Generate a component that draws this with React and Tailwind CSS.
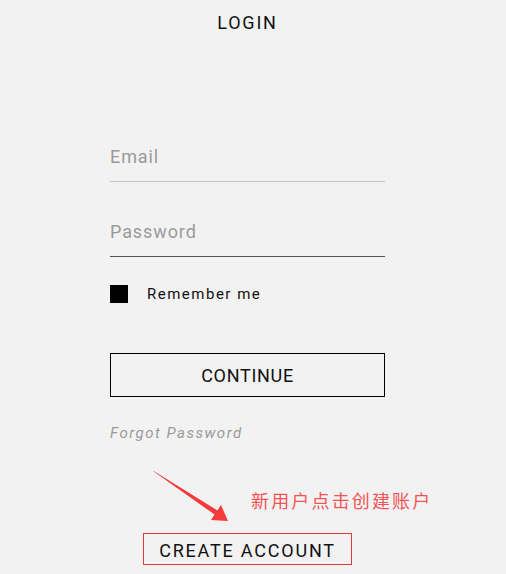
import React, { useState } from 'react';

export default function App() {
	const [email, setEmail] = useState('');
	const [password, setPassword] = useState('');

	return (
		<div className="relative min-h-screen w-full bg-[#f2f2f2] font-['Roboto',sans-serif] text-[#111]">
			<div className="ml-[110px] flex w-[275px] flex-col">
				<h1 className="mt-[11px] text-center text-[18px] leading-[24px] font-normal tracking-[0.1em]">LOGIN</h1>

				{/* inputs */}
				<input
					className="mt-[109px] box-border h-[38px] w-full border-0 border-b border-[#c6c6c6] bg-transparent p-0 pb-[13px] text-[18px] leading-[24px] tracking-[0.05em] outline-none placeholder:text-[#9a9a9a]"
					placeholder="Email"
					value={email}
					onChange={(e) => setEmail(e.target.value)}
				/>
				<input
					type="password"
					className="mt-[37px] box-border h-[38px] w-full border-0 border-b border-[#555] bg-transparent p-0 pb-[13px] text-[18px] leading-[24px] tracking-[0.05em] outline-none placeholder:text-[#9a9a9a]"
					placeholder="Password"
					value={password}
					onChange={(e) => setPassword(e.target.value)}
				/>

				<label className="mt-[27px] flex items-center">
					<span className="h-[18px] w-[18px] bg-black"></span>
					<span className="ml-[19px] text-[15px] leading-[20px] tracking-[0.1em]">Remember me</span>
				</label>

				<button className="mt-[49px] h-[44px] w-full border border-black bg-transparent text-[18px] tracking-[0.7px]">
					CONTINUE
				</button>

				<a className="mt-[26px] text-[15px] leading-[20px] italic tracking-[0.1em] text-[#9a9a9a]">Forgot Password</a>

				<div className="mt-[90px] flex justify-center">
					<button className="box-border h-[32px] border border-[#e53a3a] bg-transparent pt-[3px] pl-[15px] pr-[15px] text-[18px] leading-[24px] tracking-[0.1em]">
						CREATE ACCOUNT
					</button>
				</div>
			</div>

			{/* annotation */}
			<svg className="absolute left-[150px] top-[468px]" width="82" height="56" viewBox="150 468 82 56">
				<polygon
					points="153,471 154.5,471.5 217.4,510.4 221,505 228,521 211,520 214.6,514.6"
					fill="#f43a3a"
				/>
			</svg>
			<div className="absolute left-[251px] top-[488px] text-[18px] leading-[24px] tracking-[0.12em] text-[#f55454] font-['Noto_Sans_CJK_SC',sans-serif]">
				新用户点击创建账户
			</div>
		</div>
	);
}
